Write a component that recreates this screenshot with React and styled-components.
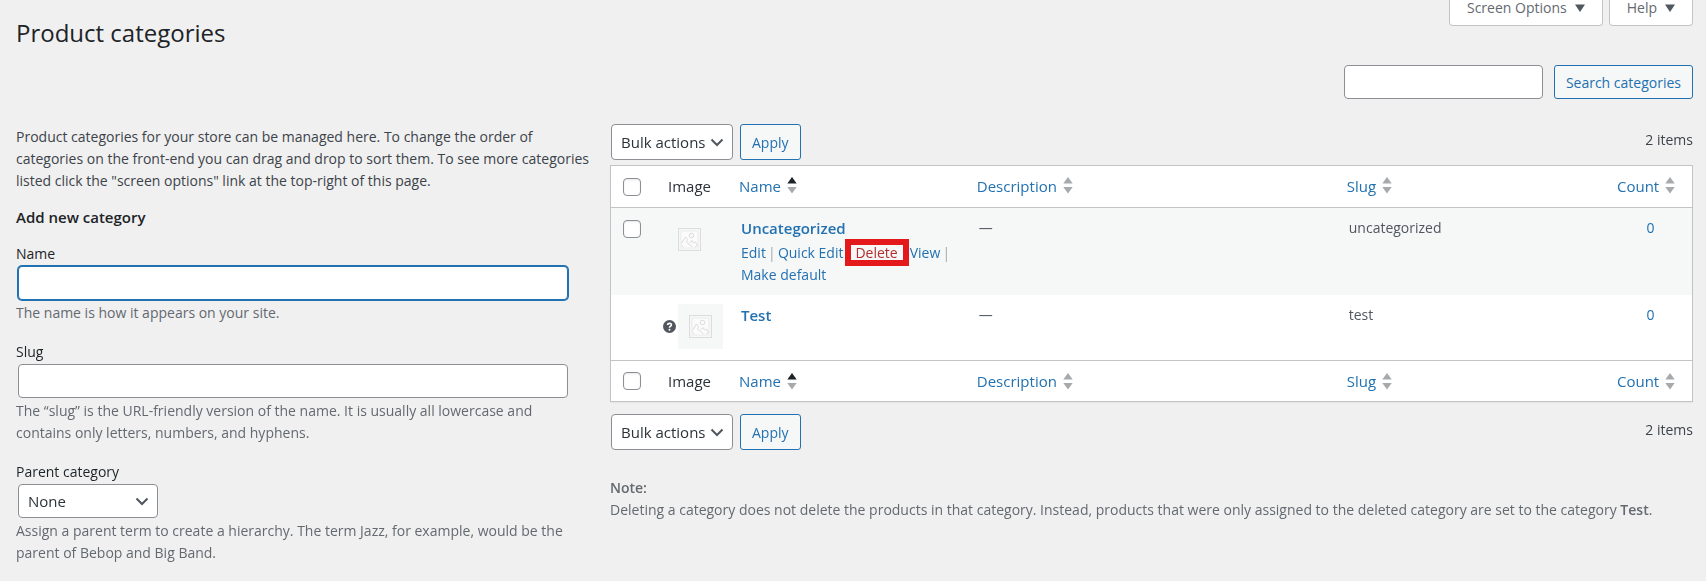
import React from "react";
import styled, { createGlobalStyle, css } from "styled-components";

const GlobalStyle = createGlobalStyle`
  *, *::before, *::after { box-sizing: border-box; }
  body {
    margin: 0;
    background: #f0f0f0;
    color: #3c434a;
    font-family: "Open Sans", "Noto Sans", sans-serif;
    font-size: 14px;
    line-height: 22px;
  }
  input, select, button { font-family: inherit; margin: 0; }
`;

const Page = styled.div`
  padding: 0 13px 16px 16px;
`;

const Header = styled.header`
  display: flex;
  justify-content: space-between;
  align-items: flex-start;
  height: 65px;
`;

const Title = styled.h1`
  margin: 0;
  padding-top: 17px;
  font-size: 24px;
  line-height: 32px;
  font-weight: 400;
  color: #1d2327;
`;

const MetaLinks = styled.div`
  display: flex;
  gap: 6px;
`;

const MetaButton = styled.button`
  display: flex;
  align-items: center;
  gap: 8px;
  height: 26px;
  padding: 0 17px 9px;
  border: 1px solid #c3c4c7;
  border-top: 0;
  border-radius: 0 0 4px 4px;
  background: #fff;
  color: #646970;
  font-size: 14px;
  line-height: 16px;
`;

const fieldBox = css`
  border: 1px solid #8c8f94;
  border-radius: 4px;
  background: #fff;
  color: #2c3338;
`;

const TextInput = styled.input`
  ${fieldBox}
  display: block;
  width: 100%;
  height: 34px;
  padding: 0 9px;
  font-size: 15px;
  &:focus {
    border-color: #2271b1;
    box-shadow: 0 0 0 1px #2271b1;
    outline: none;
  }
`;

const SearchForm = styled.form`
  display: flex;
  justify-content: flex-end;
  gap: 11px;
  margin-bottom: 25px;
`;

const SearchInput = styled(TextInput)`
  width: 199px;
`;

const Button = styled.button`
  height: ${(p) => (p.$tall ? 36 : 34)}px;
  padding: 0 11px;
  border: 1px solid #2271b1;
  border-radius: 3px;
  background: #f6f7f7;
  color: #2271b1;
  font-size: 14px;
  white-space: nowrap;
`;

const Columns = styled.div`
  display: grid;
  grid-template-columns: minmax(0, 574fr) minmax(0, 1083fr);
  gap: 20px;
`;

const Intro = styled.p`
  margin: 2px 0 14px;
`;

const FormTitle = styled.h2`
  margin: 0 0 16px;
  font-size: 15px;
  line-height: 22px;
  font-weight: 600;
  color: #1d2327;
`;

const CategoryForm = styled.form`
  display: flex;
  flex-direction: column;
  gap: 18px;
  padding-right: 22px;
`;

const Label = styled.label`
  display: block;
  margin-bottom: 2px;
  line-height: 20px;
  color: #1d2327;
`;

const FieldControl = styled.div`
  padding-left: 2px;
`;

const Help = styled.p`
  margin: 2px 0 0;
  color: #646970;
`;

const SelectWrap = styled.div`
  position: relative;
  width: ${(p) => p.$width}px;
  svg {
    position: absolute;
    right: 9px;
    top: 50%;
    margin-top: -4px;
    pointer-events: none;
  }
`;

const Select = styled.select`
  ${fieldBox}
  appearance: none;
  display: block;
  width: 100%;
  height: ${(p) => (p.$tall ? 36 : 34)}px;
  padding: 0 24px 0 9px;
  font-size: 15px;
`;

const TableNav = styled.div`
  display: flex;
  align-items: center;
  gap: 7px;
  padding-left: 1px;
  margin-top: ${(p) => (p.$bottom ? 12 : 0)}px;
  margin-bottom: ${(p) => (p.$bottom ? 27 : 5)}px;
`;

const ItemCount = styled.span`
  margin-left: auto;
  padding-bottom: 4px;
`;

const Table = styled.table`
  width: 100%;
  table-layout: fixed;
  border: 1px solid #c3c4c7;
  border-collapse: separate;
  border-spacing: 0;
  background: #fff;
  box-shadow: 0 1px 1px rgba(0, 0, 0, 0.04);
`;

const Col = styled.col`
  width: ${(p) => p.$width};
`;

const HeadCell = styled.th`
  height: ${(p) => (p.$foot ? 41 : 42)}px;
  padding: 0 8px ${(p) => (p.$foot ? 0 : 2)}px;
  border: 0 solid #c3c4c7;
  border-width: ${(p) => (p.$foot ? "1px 0 0" : "0 0 1px")};
  font-size: 15px;
  font-weight: 400;
  text-align: ${(p) => p.$align || "left"};
  white-space: nowrap;
  color: #2c3338;
`;

const SortLink = styled.a`
  display: inline-flex;
  align-items: center;
  gap: 6px;
  color: #2271b1;
  text-decoration: none;
`;

const Row = styled.tr`
  background: ${(p) => (p.$shaded ? "#f6f7f7" : "#fff")};
`;

const Cell = styled.td`
  padding: 9px 10px;
  vertical-align: top;
  text-align: ${(p) => p.$align || "left"};
  color: #50575e;
`;

const checkPadding = css`
  padding: ${(p) => (p.$body ? "12px" : "0")} 0 0 12px;
`;
const CheckHead = styled(HeadCell)`
  ${checkPadding}
`;
const CheckCell = styled(Cell)`
  ${checkPadding}
`;

const Checkbox = styled.input`
  ${fieldBox}
  appearance: none;
  display: block;
  width: 18px;
  height: 18px;
  box-shadow: inset 0 1px 2px rgba(0, 0, 0, 0.1);
`;

const ImageCell = styled(Cell)`
  padding: 9px 0 11px;
`;

const Thumb = styled.div`
  display: flex;
  justify-content: center;
  align-items: center;
  gap: 2px;
  padding-left: ${(p) => (p.$tip ? 6 : 0)}px;
`;

const ThumbBox = styled.span`
  display: flex;
  align-items: center;
  justify-content: center;
  width: 45px;
  height: 45px;
  background: #f6f7f7;
`;

const Link = styled.a`
  color: ${(p) => (p.$danger ? "#b32d2e" : "#2271b1")};
  text-decoration: none;
`;

const RowTitle = styled(Link)`
  display: block;
  font-size: 15px;
  font-weight: 600;
`;

const RowActions = styled.div`
  display: flex;
  flex-wrap: wrap;
  margin-top: 3px;
`;

const Action = styled.span`
  display: flex;
  &:not(:last-child)::after {
    content: "|";
    width: 12px;
    text-align: center;
    color: #a7aaad;
  }
`;

const Highlight = styled.span`
  position: relative;
  display: block;
  &::after {
    content: "";
    position: absolute;
    z-index: 1;
    inset: -3px -11px -2px -10px;
    border: 6px solid #e3191c;
    pointer-events: none;
  }
`;

const Note = styled.p`
  margin: 0;
  color: #646970;
  strong { font-weight: 600; }
`;

const Chevron = () => (
  <svg width="14" height="9" viewBox="0 0 14 9" aria-hidden="true">
    <path d="M1.5 1.5 7 7l5.5-5.5" fill="none" stroke="#50575e" strokeWidth="2" />
  </svg>
);

const DownArrow = () => (
  <svg width="10" height="8" viewBox="0 0 10 8" aria-hidden="true">
    <path d="M0 .5h10L5 8z" fill="#50575e" />
  </svg>
);

const SortIcon = ({ active }) => (
  <svg width="10" height="17" viewBox="0 0 10 17" aria-hidden="true">
    <path d="M5 0 9.7 6.5H.3z" fill={active ? "#1d2327" : "#a7aaad"} />
    <path d="M5 16.5.3 10h9.4z" fill="#a7aaad" />
  </svg>
);

const Placeholder = () => (
  <svg width="23" height="23" viewBox="0 0 23 23" fill="none" stroke="#dcdcde" aria-hidden="true">
    <rect x=".5" y=".5" width="22" height="22" />
    <rect x="3" y="3" width="17" height="17" fill="#fbfbfb" stroke="#ececed" />
    <circle cx="13.5" cy="7.5" r="2.3" />
    <path d="M3.5 15.5 7.5 9l2 2.5-1 2.500 6 5M3.500 17.500 5.500 19M11.500 15l2.500-2.500 1.500 2.500 2-1 2 3.500-2.500 1.500" />
  </svg>
);

const HelpIcon = () => (
  <svg width="13" height="13" viewBox="0 0 13 13" role="img" aria-label="Default category">
    <circle cx="6.5" cy="6.5" r="6.5" fill="#50575e" />
    <path d="M4.6 5C4.6 2.8 8.4 2.8 8.4 4.9 8.4 6.2 6.5 6.2 6.5 7.8" fill="none" stroke="#fff" strokeWidth="1.6" />
    <circle cx="6.5" cy="9.8" r="1" fill="#fff" />
  </svg>
);

const columns = [
  { label: "Name", active: true },
  { label: "Description" },
  { label: "Slug" },
  { label: "Count" },
];

function HeadingRow({ foot }) {
  return (
    <tr>
      <CheckHead $foot={foot}>
        <Checkbox type="checkbox" aria-label="Select all" />
      </CheckHead>
      <HeadCell $foot={foot} $align="center">Image</HeadCell>
      {columns.map((c) => (
        <HeadCell key={c.label} $foot={foot}>
          <SortLink href="#sort">
            {c.label}
            <SortIcon active={c.active} />
          </SortLink>
        </HeadCell>
      ))}
    </tr>
  );
}

function BulkActions({ bottom }) {
  return (
    <TableNav $bottom={bottom}>
      <SelectWrap $width={122}>
        <Select $tall aria-label="Select bulk action">
          <option>Bulk actions</option>
          <option>Delete</option>
        </Select>
        <Chevron />
      </SelectWrap>
      <Button $tall type="button">Apply</Button>
      <ItemCount>2 items</ItemCount>
    </TableNav>
  );
}

export default function App() {
  return (
    <Page>
      <GlobalStyle />
      <Header>
        <Title>Product categories</Title>
        <MetaLinks>
          <MetaButton type="button">Screen Options <DownArrow /></MetaButton>
          <MetaButton type="button">Help <DownArrow /></MetaButton>
        </MetaLinks>
      </Header>
      <SearchForm>
        <SearchInput type="search" aria-label="Search categories" />
        <Button type="button">Search categories</Button>
      </SearchForm>
      <Columns>
        <section>
          <Intro>
            Product categories for your store can be managed here. To change the order of
            categories on the front-end you can drag and drop to sort them. To see more
            categories listed click the "screen options" link at the top-right of this page.
          </Intro>
          <FormTitle>Add new category</FormTitle>
          <CategoryForm>
            <div>
              <Label htmlFor="name">Name</Label>
              <FieldControl><TextInput id="name" type="text" autoFocus /></FieldControl>
              <Help>The name is how it appears on your site.</Help>
            </div>
            <div>
              <Label htmlFor="slug">Slug</Label>
              <FieldControl><TextInput id="slug" type="text" /></FieldControl>
              <Help>
                The “slug” is the URL-friendly version of the name. It is usually all lowercase
                and contains only letters, numbers, and hyphens.
              </Help>
            </div>
            <div>
              <Label htmlFor="parent">Parent category</Label>
              <FieldControl>
                <SelectWrap $width={140}>
                  <Select id="parent"><option>None</option></Select>
                  <Chevron />
                </SelectWrap>
              </FieldControl>
              <Help>
                Assign a parent term to create a hierarchy. The term Jazz, for example, would be
                the parent of Bebop and Big Band.
              </Help>
            </div>
          </CategoryForm>
        </section>
        <section>
          <BulkActions />
          <Table>
            <colgroup>
              <Col $width="37px" />
              <Col $width="83px" />
              <Col $width="22%" />
              <Col />
              <Col $width="25%" />
              <Col $width="83px" />
            </colgroup>
            <thead><HeadingRow /></thead>
            <tbody>
              <Row $shaded>
                <CheckCell $body>
                  <Checkbox type="checkbox" aria-label="Select Uncategorized" />
                </CheckCell>
                <ImageCell>
                  <Thumb><ThumbBox><Placeholder /></ThumbBox></Thumb>
                </ImageCell>
                <Cell>
                  <RowTitle href="#uncategorized">Uncategorized</RowTitle>
                  <RowActions>
                    <Action><Link href="#edit">Edit</Link></Action>
                    <Action><Link href="#quick-edit">Quick Edit</Link></Action>
                    <Action>
                      <Highlight><Link $danger href="#delete">Delete</Link></Highlight>
                    </Action>
                    <Action><Link href="#view">View</Link></Action>
                    <Action><Link href="#default">Make default</Link></Action>
                  </RowActions>
                </Cell>
                <Cell>—</Cell>
                <Cell>uncategorized</Cell>
                <Cell $align="center"><Link href="#count">0</Link></Cell>
              </Row>
              <Row>
                <CheckCell $body />
                <ImageCell>
                  <Thumb $tip><HelpIcon /><ThumbBox><Placeholder /></ThumbBox></Thumb>
                </ImageCell>
                <Cell><RowTitle href="#test">Test</RowTitle></Cell>
                <Cell>—</Cell>
                <Cell>test</Cell>
                <Cell $align="center"><Link href="#count">0</Link></Cell>
              </Row>
            </tbody>
            <tfoot><HeadingRow foot /></tfoot>
          </Table>
          <BulkActions bottom />
          <Note>
            <strong>Note:</strong><br />
            Deleting a category does not delete the products in that category. Instead, products
            that were only assigned to the deleted category are set to the category <strong>Test</strong>.
          </Note>
        </section>
      </Columns>
    </Page>
  );
}
